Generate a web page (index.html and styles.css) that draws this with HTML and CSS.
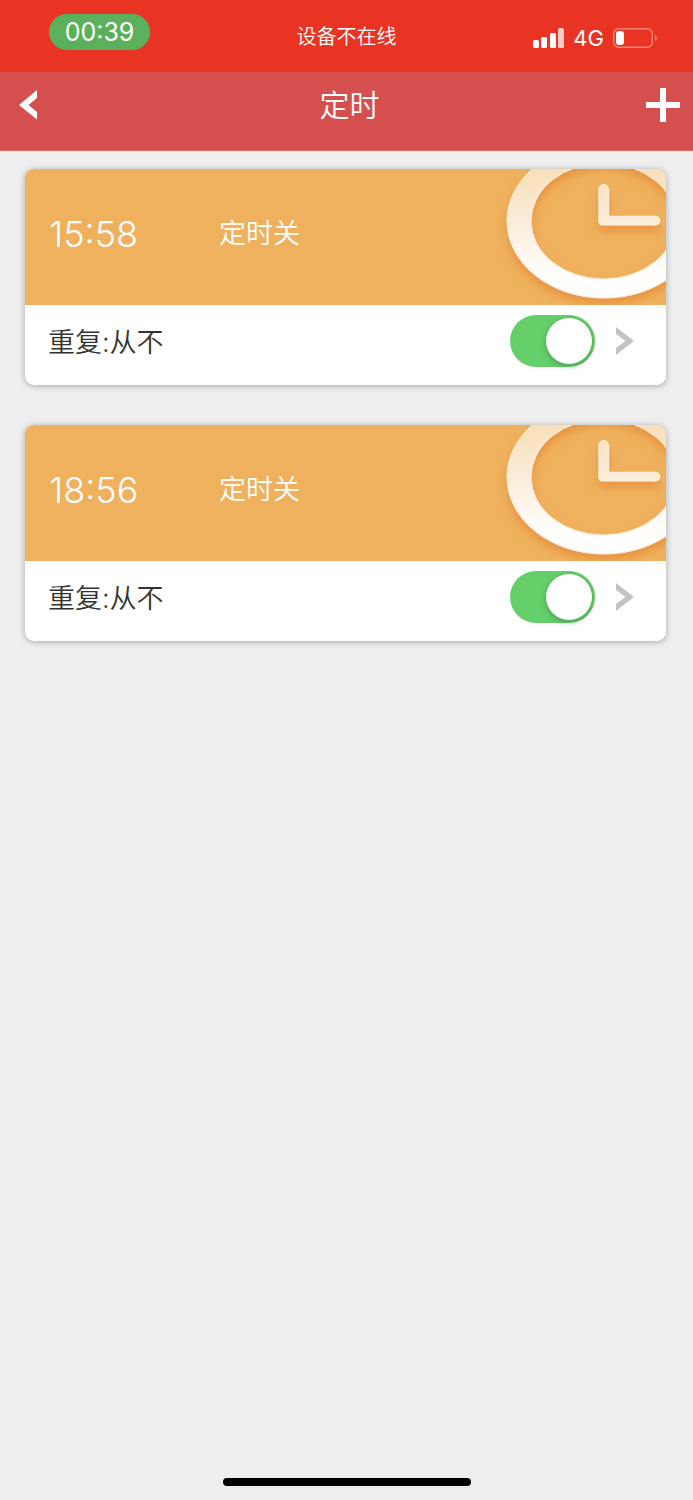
FILE: index.html
```html
<!DOCTYPE html>
<html lang="zh-CN">
<head>
  <meta charset="UTF-8">
  <meta name="viewport" content="width=device-width, initial-scale=1.0">
  <title>定时</title>
  <link rel="stylesheet" href="styles.css">
</head>
<body>
  <div class="status-bar">
    <span class="status-time">00:39</span>
    <span class="status-text">设备不在线</span>
    <div class="status-icons">
      <svg width="31" height="20" viewBox="0 0 31 20" fill="#fff" aria-hidden="true">
        <rect x="0" y="12" width="6" height="8" rx="1.5"/>
        <rect x="8" y="9" width="6" height="11" rx="1.5"/>
        <rect x="17" y="5" width="6" height="15" rx="1.5"/>
        <rect x="25" y="0" width="6" height="20" rx="1.5" opacity="0.75"/>
      </svg>
      <span class="network">4G</span>
      <svg width="44" height="20" viewBox="0 0 44 20" aria-hidden="true">
        <rect x="0.7" y="0.7" width="38.6" height="18.6" rx="5" fill="none" stroke="#fff" stroke-width="1.4" opacity="0.4"/>
        <rect x="3" y="3" width="8" height="14" rx="3" fill="#fff"/>
        <path d="M42 6.500c2.400 1.600 2.400 5.400 0 7z" fill="#fff" opacity="0.4"/>
      </svg>
    </div>
  </div>

  <header class="navbar">
    <button type="button" class="icon-btn back-btn" aria-label="返回">
      <svg width="18" height="30" viewBox="0 0 18 30"><path d="M18 0v8L9.500 15l8.500 7v7.500L0 15z" fill="#fff"/></svg>
    </button>
    <h1>定时</h1>
    <button type="button" class="icon-btn add-btn" aria-label="添加">
      <svg width="34" height="34" viewBox="0 0 34 34"><path d="M14 0h6v14h14v6H20v14h-6V20H0v-6h14z" fill="#fff"/></svg>
    </button>
  </header>

  <!-- 时钟图案与箭头，供各卡片复用 -->
  <svg class="defs" width="0" height="0" aria-hidden="true">
    <defs>
      <linearGradient id="ring-fill" gradientUnits="userSpaceOnUse" x1="0" y1="0" x2="0" y2="130">
        <stop offset="0" stop-color="#f9dfbb"/>
        <stop offset="0.45" stop-color="#fbeedd"/>
        <stop offset="0.8" stop-color="#fffdfb"/>
        <stop offset="1" stop-color="#fff"/>
      </linearGradient>
      <linearGradient id="hand-fill" gradientUnits="userSpaceOnUse" x1="0" y1="15" x2="0" y2="57">
        <stop offset="0" stop-color="#f9e1c0"/>
        <stop offset="1" stop-color="#fcefde"/>
      </linearGradient>
      <filter id="clock-shadow" x="-20%" y="-20%" width="140%" height="150%">
        <feDropShadow dx="0" dy="6" stdDeviation="4" flood-color="#e68a38" flood-opacity="0.75"/>
      </filter>
    </defs>
    <symbol id="clock" viewBox="0 0 166 136">
      <path filter="url(#clock-shadow)" fill="url(#ring-fill)" fill-rule="evenodd" stroke="#fdf0dc" stroke-width="1"
        d="M7 52a97 77 0 1 0 194 0a97 77 0 1 0-194 0zM31 52a72.500 58 0 1 1 145 0a72.500 58 0 1 1-145 0z"/>
      <path filter="url(#clock-shadow)" fill="url(#hand-fill)" stroke="#fdeedb" stroke-width="1.500"
        d="M99 20.500a4.700 4.700 0 0 1 9.400 0V47.500H155.500a4 4 0 0 1 0 8.300H103q-4 0-4-4z"/>
    </symbol>
    <symbol id="arrow" viewBox="0 0 18 28">
      <path d="M0 0v7L9.500 14 0 21v7L18 14z" fill="#c3c3c3"/>
    </symbol>
  </svg>

  <main class="timer-list">
    <section class="timer-card">
      <div class="timer-banner">
        <span class="timer-time">15:58</span>
        <span class="timer-action">定时关</span>
        <svg class="clock" width="166" height="136" aria-hidden="true"><use href="#clock"/></svg>
      </div>
      <div class="timer-footer">
        <label for="timer-1">重复:从不</label>
        <input type="checkbox" class="switch" id="timer-1" checked>
        <button type="button" class="icon-btn" aria-label="编辑">
          <svg width="18" height="28"><use href="#arrow"/></svg>
        </button>
      </div>
    </section>

    <section class="timer-card">
      <div class="timer-banner">
        <span class="timer-time">18:56</span>
        <span class="timer-action">定时关</span>
        <svg class="clock" width="166" height="136" aria-hidden="true"><use href="#clock"/></svg>
      </div>
      <div class="timer-footer">
        <label for="timer-2">重复:从不</label>
        <input type="checkbox" class="switch" id="timer-2" checked>
        <button type="button" class="icon-btn" aria-label="编辑">
          <svg width="18" height="28"><use href="#arrow"/></svg>
        </button>
      </div>
    </section>
  </main>

  <div class="home-indicator"></div>
</body>
</html>
```

FILE: styles.css
```css
:root {
  --status-color: #e93323;
  --nav-color: #d54f4e;
  --banner-color: #efb15e;
  --switch-color: #65cf69;
  --bg-color: #eee;
  --text-color: #333;
}

* {
  box-sizing: border-box;
  margin: 0;
  padding: 0;
}

body {
  min-height: 100vh;
  display: flex;
  flex-direction: column;
  font-family: Inter, "Noto Sans CJK SC", sans-serif;
  background-color: var(--bg-color);
  color: var(--text-color);
}

.status-bar {
  display: grid;
  grid-template-columns: 1fr auto 1fr;
  align-items: start;
  height: 72px;
  padding: 14px 36px 0;
  background-color: var(--status-color);
  color: #fff;
}

.status-time {
  width: 101px;
  margin-left: 13px;
  border-radius: 18px;
  background-color: #5bb05b;
  font-size: 25px;
  font-weight: 400;
  line-height: 36px;
  text-align: center;
}

.status-text {
  font-size: 20px;
  font-weight: 350;
  line-height: 46px;
}

.status-icons {
  display: flex;
  align-items: center;
  justify-self: end;
  gap: 9px;
  line-height: 48px;
}

.network {
  font-size: 22px;
}

.navbar {
  display: grid;
  grid-template-columns: 1fr auto 1fr;
  align-items: center;
  height: 79px;
  padding: 0 13px 12px 19px;
  border-bottom: 1px solid #df6a66;
  background-color: var(--nav-color);
  color: #fff;
}

h1 {
  font-size: 30px;
  font-weight: 350;
  line-height: 40px;
}

.icon-btn {
  display: flex;
  border: none;
  background: none;
  cursor: pointer;
}

.back-btn {
  justify-self: start;
}

.add-btn {
  justify-self: end;
}

.defs {
  position: absolute;
}

.timer-list {
  flex: 1;
  display: flex;
  flex-direction: column;
  gap: 40px;
  padding: 18px 27px 40px 25px;
}

.timer-card {
  overflow: hidden;
  border-radius: 9px;
  background-color: #fff;
  box-shadow: 0 1px 6px rgba(0, 0, 0, 0.3);
}

.timer-banner {
  display: flex;
  align-items: center;
  height: 136px;
  padding: 0 0 6px 24px;
  background-color: var(--banner-color);
  color: #fff;
}

.timer-time {
  width: 170px;
  font-size: 36px;
  font-weight: 350;
  line-height: 48px;
}

.timer-action {
  font-size: 27px;
  font-weight: 350;
  line-height: 48px;
}

.clock {
  align-self: flex-start;
  margin-left: auto;
}

.timer-footer {
  display: flex;
  align-items: center;
  height: 80px;
  padding: 0 32px 8px 23px;
}

.timer-footer label {
  flex: 1;
  padding-top: 4px;
  font-size: 27px;
  font-weight: 350;
  line-height: 40px;
}

.switch {
  appearance: none;
  width: 85px;
  height: 52px;
  margin-right: 21px;
  padding: 3px;
  border-radius: 26px;
  background-color: #ddd;
  cursor: pointer;
}

.switch::before {
  content: "";
  display: block;
  width: 46px;
  height: 46px;
  border-radius: 50%;
  background-color: #fff;
  box-shadow: 0 2px 6px rgba(0, 0, 0, 0.25);
}

.switch:checked {
  background-color: var(--switch-color);
}

.switch:checked::before {
  margin-left: auto;
}

.home-indicator {
  align-self: center;
  width: 248px;
  height: 8px;
  margin-bottom: 14px;
  border-radius: 4px;
  background-color: #000;
}
```
